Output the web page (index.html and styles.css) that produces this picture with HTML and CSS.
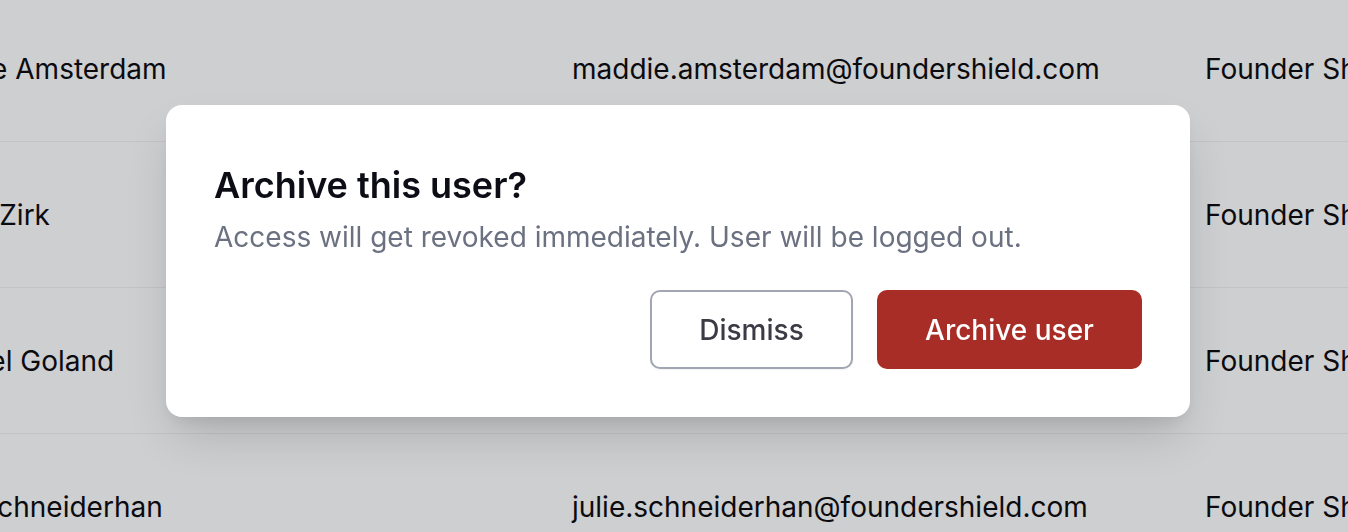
FILE: index.html
```html
<!DOCTYPE html>
<html lang="en">
<head>
<meta charset="utf-8">
<title>Archive user</title>
<link rel="stylesheet" href="styles.css">
</head>
<body>
<div class="table">
  <div class="row">
    <div class="cell name">Maddie Amsterdam</div>
    <div class="cell email">maddie.amsterdam@foundershield.com</div>
    <div class="cell company">Founder Shield</div>
  </div>
  <div class="row">
    <div class="cell name">Daniel Zirk</div>
    <div class="cell email">daniel.zirk@foundershield.com</div>
    <div class="cell company">Founder Shield</div>
  </div>
  <div class="row">
    <div class="cell name">Michael Goland</div>
    <div class="cell email">michael.goland@foundershield.com</div>
    <div class="cell company">Founder Shield</div>
  </div>
  <div class="row">
    <div class="cell name">Julie Schneiderhan</div>
    <div class="cell email">julie.schneiderhan@foundershield.com</div>
    <div class="cell company">Founder Shield</div>
  </div>
</div>

<div class="overlay">
  <div class="modal" role="dialog" aria-labelledby="mt">
    <h2 class="modal-title" id="mt">Archive this user?</h2>
    <p class="modal-text">Access will get revoked immediately. User will be logged out.</p>
    <div class="modal-actions">
      <button class="btn btn-secondary">Dismiss</button>
      <button class="btn btn-danger">Archive user</button>
    </div>
  </div>
</div>
</body>
</html>
```

FILE: styles.css
```css
* { box-sizing: border-box; }
html, body { margin: 0; padding: 0; }
body {
  background: #cecfd1;
  font-family: Inter, "Noto Sans", sans-serif;
  color: #0b0b0f;
  overflow: hidden;
  height: 532px;
}
.table {
  margin-top: -4px;
  margin-left: -91px;
}
.row {
  display: flex;
  align-items: center;
  height: 146px;
  border-bottom: 1px solid #c3c3c6;
  font-size: 28px;
  white-space: nowrap;
}
.cell { flex: none; }
.cell.name { width: 663px; }
.cell.email { width: 633px; }
.overlay {
  position: fixed;
  inset: 0;
  padding: 105px 0 0 166px;
}
.modal {
  width: 1024px;
  height: 312px;
  background: #fff;
  border-radius: 16px;
  padding: 60px 48px 48px 48px;
  box-shadow: 0 24px 48px -8px rgba(0,0,0,0.16), 0 8px 16px -4px rgba(0,0,0,0.08);
  display: flex;
  flex-direction: column;
}
.modal-title {
  margin: 0;
  font-size: 36px;
  font-weight: 600;
  line-height: 40px;
  color: #0d0d16;
}
.modal-text {
  margin: 16px 0 0;
  font-size: 28px;
  line-height: 32px;
  color: #6b7180;
}
.modal-actions {
  margin-top: auto;
  display: flex;
  justify-content: flex-end;
  gap: 24px;
}
.btn {
  font-family: Inter, "Noto Sans", sans-serif;
  font-size: 28px;
  font-weight: 500;
  height: 79px;
  border-radius: 10px;
  cursor: pointer;
}
.btn-secondary {
  width: 203px;
  background: #fff;
  color: #3b3b45;
  border: 2px solid #a2a6b2;
  box-shadow: 0 1px 2px rgba(0,0,0,0.06);
}
.btn-danger {
  width: 265px;
  background: #a82d26;
  color: #fff;
  border: none;
}
```
